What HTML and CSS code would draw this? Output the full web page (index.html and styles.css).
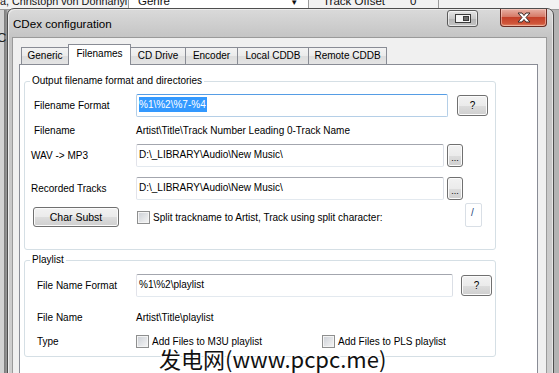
FILE: index.html
```html
<!DOCTYPE html>
<html lang="en">
<head>
  <meta charset="UTF-8">
  <title>CDex configuration</title>
  <link rel="stylesheet" href="styles.css">
</head>
<body>
  <div class="desk">
    <div class="backlist">
      <div class="cell artist">a, Christoph von Dohnanyi</div>
      <div class="cell genre">Genre <span class="arrow">&#9660;</span></div>
      <div class="cell offset">Track Offset</div>
      <div class="cell zero">0</div>
    </div>
    <div class="backside">C</div>

    <div class="window">
      <div class="titlebar">
        <span class="title">CDex configuration</span>
        <div class="caption">
          <div class="cbtn help">
            <svg width="16" height="9" viewBox="0 0 16 9">
              <rect x="0.5" y="0.5" width="15" height="8" fill="#f4f4f4" stroke="#3a3a3a"/>
              <rect x="8.5" y="2.5" width="5" height="4" fill="#6b6b6b" stroke="#3a3a3a"/>
            </svg>
          </div>
          <div class="cbtn close">
            <svg width="16" height="11" viewBox="0 0 16 11">
              <path d="M2 1 L6 1 L8 3.5 L10 1 L14 1 L10 5.5 L14 10 L10 10 L8 7.5 L6 10 L2 10 L6 5.5 Z" fill="#ffffff" stroke="#3b2a28" stroke-width="1"/>
            </svg>
          </div>
        </div>
      </div>

      <div class="client">
        <div class="tabs">
          <div class="tab w-generic">Generic</div>
          <div class="tab active w-filenames">Filenames</div>
          <div class="tab w-cddrive">CD Drive</div>
          <div class="tab w-encoder">Encoder</div>
          <div class="tab w-local">Local CDDB</div>
          <div class="tab w-remote">Remote CDDB</div>
        </div>

        <div class="panel">
          <fieldset class="group output">
            <legend>Output filename format and directories</legend>

            <div class="row r1">
              <span class="label pad9">Filename Format</span>
              <div class="input focus w312"><span class="sel">%1\%2\%7-%4</span></div>
              <button class="btn qbtn">?</button>
            </div>

            <div class="row r2">
              <span class="label pad9">Filename</span>
              <span class="value">Artist\Title\Track Number Leading 0-Track Name</span>
            </div>

            <div class="row r3">
              <span class="label pad6">WAV -&gt; MP3</span>
              <div class="input w308">D:\_LIBRARY\Audio\New Music\</div>
              <button class="btn dots">...</button>
            </div>

            <div class="row r4">
              <span class="label pad6">Recorded Tracks</span>
              <div class="input w308">D:\_LIBRARY\Audio\New Music\</div>
              <button class="btn dots">...</button>
            </div>

            <div class="row r5">
              <button class="btn charsubst">Char Subst</button>
              <label class="check split"><span class="box"></span>Split trackname to Artist, Track using split character:</label>
              <div class="input splitchar">/</div>
            </div>
          </fieldset>

          <fieldset class="group playlist">
            <legend>Playlist</legend>

            <div class="row p1">
              <span class="label pad12">File Name Format</span>
              <div class="input w317">%1\%2\playlist</div>
              <button class="btn qbtn q2">?</button>
            </div>

            <div class="row p2">
              <span class="label pad12">File Name</span>
              <span class="value">Artist\Title\playlist</span>
            </div>

            <div class="row p3">
              <span class="label pad12">Type</span>
              <label class="check m3u"><span class="box"></span>Add Files to M3U playlist</label>
              <label class="check pls"><span class="box"></span>Add Files to PLS playlist</label>
            </div>
          </fieldset>
        </div>
      </div>
    </div>

    <div class="watermark">发电网(www.pcpc.me)</div>
  </div>
</body>
</html>
```

FILE: styles.css
```css
html, body {
  margin: 0;
  padding: 0;
  width: 100%;
  height: 100%;
  overflow: hidden;
  font-family: 'Liberation Sans', Arial, sans-serif;
}
.desk {
  position: relative;
  width: 559px;
  height: 373px;
  overflow: hidden;
  background: linear-gradient(90deg, #d3d3d3 0, #d3d3d3 4px, #7a7a7a 4px, #9a9a9a 7px, #b3b3b3 7px);
}

/* list of the app behind the dialog */
.backlist {
  display: flex;
  height: 9px;
  overflow: hidden;
  background: #f2f2f2;
  border-bottom: 1px solid #9a9a9a;
}
.cell {
  font-size: 11.5px;
  line-height: 12px;
  margin-top: -5px;
  color: #111;
  white-space: nowrap;
  overflow: hidden;
}
.artist {
  width: 128px;
  font-size: 10.8px;
}
.genre {
  width: 170px;
  padding-left: 9px;
  background: #fff;
  border-left: 1px solid #9a9a9a;
  border-right: 1px solid #9a9a9a;
  position: relative;
}
.arrow {
  font-size: 8px;
  margin-left: 117px;
}
.offset {
  width: 87px;
  padding-left: 14px;
  background: #f2f2f2;
}
.zero {
  width: 28px;
  background: #f2f2f2;
  border-right: 1px solid #9a9a9a;
}
.backside {
  font-size: 13px;
  color: #222;
  margin: 20px 0 0 -3px;
}

/* dialog window */
.window {
  position: absolute;
  left: 7px;
  top: 8px;
  width: 547px;
  height: 390px;
  box-sizing: border-box;
  border: 1px solid #4e4e4e;
  border-radius: 7px 7px 0 0;
  padding: 0 6px 0 4px;
  background: linear-gradient(#dadada, #c3c3c3 30px, #c6c6c6 120px, #cfcfcf);
  box-shadow: inset 1px 1px 0 #ececec, inset -1px 0 0 #e6e6e6;
}
.titlebar {
  height: 28px;
  display: flex;
  align-items: flex-start;
}
.title {
  font-size: 11.6px;
  color: #000;
  padding: 8px 0 0 1px;
}
.caption {
  margin-left: auto;
  display: flex;
}
.cbtn {
  height: 18px;
  box-sizing: border-box;
  border: 1px solid #5a5a5a;
  border-top: none;
  display: flex;
  align-items: center;
  justify-content: center;
}
.help {
  width: 31px;
  margin-top: 1px;
  height: 17px;
  border-top: 1px solid #5a5a5a;
  border-radius: 3px;
  background: linear-gradient(#e6e6e6, #c9c9c9 50%, #b3b3b3 51%, #c4c4c4);
  box-shadow: inset 0 0 0 1px rgba(255,255,255,0.6);
}
.close {
  width: 47px;
  margin-left: 22px;
  border-color: #6a2b22;
  border-radius: 0 0 4px 4px;
  background: linear-gradient(#e8b0a4, #d67b68 45%, #c4412a 50%, #d05539 85%, #e08a6a);
  box-shadow: inset 0 0 0 1px rgba(255,220,210,0.5);
}

.client {
  background: #f0f0f0;
  border: 1px solid #9a9a9a;
  border-bottom: none;
  height: 400px;
  padding: 6px 8px 0 6px;
}

/* tabs */
.tabs {
  display: flex;
  align-items: flex-end;
  height: 21px;
  margin: 0 0 -1px 2px;
  position: relative;
  z-index: 1;
}
.tab {
  box-sizing: border-box;
  height: 18px;
  border: 1px solid #898c95;
  border-right: none;
  background: linear-gradient(#f3f3f3, #ebebeb 50%, #dddddd 51%, #e4e4e4);
  font-size: 10px;
  line-height: 16px;
  text-align: center;
  color: #000;
}
.tab.active {
  height: 21px;
  background: #fff;
  border-bottom: none;
  border-right: 1px solid #898c95;
  line-height: 17px;
}
.tab.active + .tab { border-left: none; }
.w-generic { width: 47px; }
.w-filenames { width: 63px; }
.w-cddrive { width: 54px; }
.w-encoder { width: 52px; }
.w-local { width: 71px; }
.w-remote { width: 79px; border-right: 1px solid #898c95; }

.panel {
  background: #fff;
  border: 1px solid #898c95;
  border-bottom: none;
  height: 330px;
  padding: 10px 0 0 0;
}

/* group boxes */
.group {
  margin: 0 0 0 4px;
  width: 472px;
  box-sizing: border-box;
  padding: 0;
  border: 1px solid #d5dfe5;
  border-radius: 3px;
  min-width: 0;
}
.group legend {
  margin-left: 5px;
  padding: 0 2px;
  font-size: 10px;
  line-height: 12px;
  color: #000;
}
.output { padding-bottom: 22px; }
.playlist {
  margin-top: 4px;
  padding-bottom: 4px;
}

.row {
  display: flex;
  align-items: center;
  font-size: 10px;
  color: #000;
}
.label {
  width: 111px;
  box-sizing: border-box;
  flex-shrink: 0;
  white-space: nowrap;
}
.pad6 { padding-left: 6px; }
.pad9 { padding-left: 9px; }
.pad12 { padding-left: 12px; }
.value { white-space: nowrap; }

.r1 { margin-top: 7px; height: 23px; }
.r2 { margin-top: 1px; height: 24px; }
.r3 { margin-top: 2px; height: 23px; }
.r4 { margin-top: 10px; height: 23px; }
.r5 { margin-top: 3px; height: 24px; align-items: flex-start; }

.p1 { margin-top: 8px; height: 23px; }
.p2 { margin-top: 9px; height: 22px; }
.p3 { margin-top: 2px; height: 22px; }

/* text boxes */
.input {
  box-sizing: border-box;
  height: 23px;
  border: 1px solid #abadb3;
  border-top-color: #a3a6ae;
  border-left-color: #e2e3ea;
  border-right-color: #dbdfe6;
  border-bottom-color: #e3e9ef;
  border-radius: 2px;
  background: #fff;
  font-size: 10px;
  line-height: 20px;
  padding-left: 2px;
  white-space: nowrap;
  overflow: hidden;
}
.input.focus {
  border-color: #569de5;
  border-left-color: #b5cfe7;
  border-right-color: #b5cfe7;
  border-bottom-color: #b5cfe7;
}
.sel {
  background: #3399ff;
  color: #fff;
  padding: 2px 1px 2px 0;
}
.w312 { width: 312px; }
.w308 { width: 308px; }
.w317 { width: 317px; }
.splitchar {
  width: 17px;
  height: 24px;
  margin-left: auto;
  margin-right: 13px;
  border-color: #d9dfe6;
  color: #1d3f7a;
  padding-left: 5px;
  line-height: 18px;
}

/* push buttons */
.btn {
  box-sizing: border-box;
  border: 1px solid #707070;
  border-radius: 3px;
  background: linear-gradient(#f2f2f2, #ebebeb 50%, #dddddd 51%, #cfcfcf);
  box-shadow: inset 0 0 0 1px #fbfbfb;
  font-family: 'Liberation Sans', Arial, sans-serif;
  font-size: 10px;
  color: #000;
  padding: 0;
}
.qbtn {
  width: 31px;
  height: 21px;
  margin-left: 9px;
}
.q2 { margin-left: 8px; }
.dots {
  width: 16px;
  height: 23px;
  margin-left: 3px;
  line-height: 26px;
  font-size: 9px;
}
.charsubst {
  width: 86px;
  height: 20px;
  margin: 4px 0 0 8px;
  font-size: 10.5px;
}

/* check boxes */
.check {
  display: flex;
  align-items: center;
  white-space: nowrap;
}
.box {
  width: 13px;
  height: 13px;
  box-sizing: border-box;
  border: 1px solid #8e8f8f;
  background: linear-gradient(135deg, #cbcfd5, #f6f6f6);
  box-shadow: inset 0 0 0 1px #f4f4f4;
  margin-right: 3px;
}
.split {
  margin: 8px 0 0 18px;
  height: 13px;
}
.m3u { margin-left: 0; }
.pls { margin-left: 60px; }

.watermark {
  position: absolute;
  left: 159px;
  top: 343px;
  font-family: 'Noto Sans CJK SC', 'Liberation Sans', sans-serif;
  font-size: 22px;
  line-height: 30px;
  color: #111;
  white-space: nowrap;
  text-shadow: 1px 0 0 #fff, -1px 0 0 #fff, 0 1px 0 #fff, 0 -1px 0 #fff,
    1px 1px 0 #fff, -1px -1px 0 #fff, 1px -1px 0 #fff, -1px 1px 0 #fff;
}
```
